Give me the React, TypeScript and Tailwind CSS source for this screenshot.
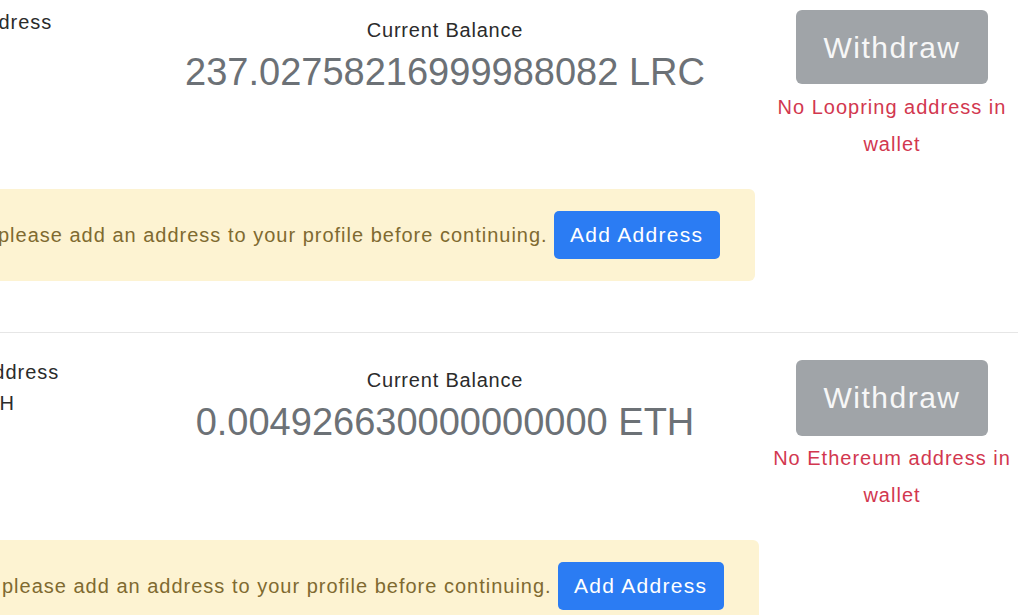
import React from "react";

type RowProps = {
  leftLines: { text: string; ml: string }[];
  amount: string;
  note: string;
  boxMl: string;
  btnH: string;
  last?: boolean;
};

function Row({ leftLines, amount, note, boxMl, btnH, last }: RowProps) {
  return (
    <div className={last ? "pt-[17px]" : "pt-[17px] pb-[51px] border-b border-[#e6e6e6]"}>
      <div className="flex items-start">
        <div className="w-[155px] pt-[7px] text-[20px] leading-[31px] tracking-[1px] text-[#2b2b2b] whitespace-nowrap">
          {leftLines.map((l, i) => (
            <div key={i} className={l.ml}>
              {l.text}
            </div>
          ))}
        </div>
        <div className="w-[580px] pt-[15px] text-center">
          <div className="text-[20px] leading-[30px] tracking-[0.8px] text-[#2b2b2b]">Current Balance</div>
          <div className="mt-[4px] text-[38px] leading-[46px] text-[#6c7176] whitespace-nowrap">{amount}</div>
        </div>
        <div className="ml-[31px] w-[252px] pt-[10px] flex flex-col items-center">
          <div
            className={
              "w-[192px] rounded-[6px] bg-[#a0a4a8] text-[#f7f7f7] text-[30px] tracking-[1.5px] flex items-center justify-center " +
              btnH
            }
          >
            Withdraw
          </div>
          <div className="mt-[4.5px] text-center text-[20px] leading-[37px] tracking-[1px] text-[#d2374f]">
            <div className="whitespace-nowrap">{note}</div>
            <div>wallet</div>
          </div>
        </div>
      </div>
      <div
        className={
          "mt-[26px] inline-flex items-center rounded-[6px] bg-[#fdf3d2] py-[22px] pl-[38px] pr-[35px] gap-[6px] " +
          boxMl
        }
      >
        <span className="text-[20px] tracking-[1px] text-[#7f6a30] whitespace-nowrap">
          please add an address to your profile before continuing.
        </span>
        <span className="w-[166px] h-[48px] rounded-[5px] bg-[#2b7cf3] text-white text-[21px] tracking-[1.3px] flex items-center justify-center whitespace-nowrap">
          Add Address
        </span>
      </div>
    </div>
  );
}

export default function App() {
  return (
    <div className="w-[1024px] h-[615px] overflow-hidden bg-white" style={{ fontFamily: '"Liberation Sans", Arial, sans-serif' }}>
      <div className="-mt-[17px] w-[1018px]">
        <Row
          leftLines={[{ text: "Address", ml: "-ml-[28px]" }]}
          amount="237.02758216999988082 LRC"
          note="No Loopring address in"
          boxMl="-ml-[40px]"
          btnH="h-[74px]"
        />
        <Row
          leftLines={[
            { text: "Address", ml: "-ml-[21px]" },
            { text: "ETH", ml: "-ml-[28px]" },
          ]}
          amount="0.004926630000000000 ETH"
          note="No Ethereum address in"
          boxMl="-ml-[36px]"
          btnH="h-[76px]"
          last
        />
      </div>
    </div>
  );
}
